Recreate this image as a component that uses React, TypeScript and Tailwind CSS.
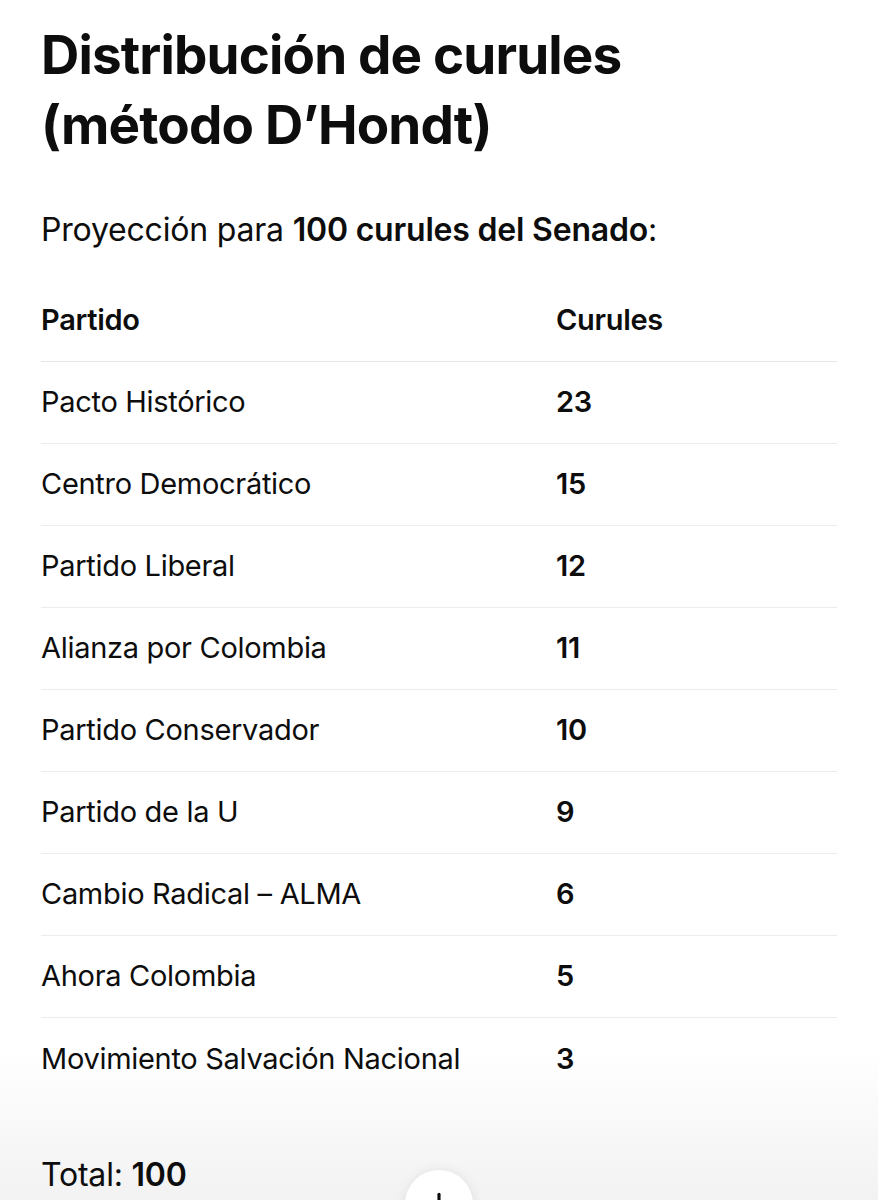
import { ArrowDown } from 'lucide-react';

const rows: [string, number][] = [
  ['Pacto Histórico', 23],
  ['Centro Democrático', 15],
  ['Partido Liberal', 12],
  ['Alianza por Colombia', 11],
  ['Partido Conservador', 10],
  ['Partido de la U', 9],
  ['Cambio Radical – ALMA', 6],
  ['Ahora Colombia', 5],
  ['Movimiento Salvación Nacional', 3],
];

export default function App() {
  return (
    <div className="relative h-[1200px] overflow-hidden bg-white text-[#0d0d0d] font-['Inter',sans-serif]">
      {/* bottom fade behind the composer */}
      <div className="absolute inset-x-0 bottom-0 h-[150px] bg-gradient-to-b from-white to-[#f2f2f2]" />

      <div className="relative px-[41px] pt-[20px]">
        <h2 className="text-[53px] font-bold leading-[70px] tracking-[-0.85px]">
          Distribución de curules
          <br />
          (método D’Hondt)
        </h2>

        <p className="mt-[50px] text-[32px] leading-[40px] tracking-[-0.2px]">
          Proyección para <span className="font-semibold">100 curules del Senado</span>:
        </p>

        <table className="mt-[29px] w-full border-collapse text-[29px] tracking-[-0.3px]">
          <thead>
            <tr className="h-[82px] border-b border-[#e5e5e5]">
              <th className="w-[515px] text-left font-semibold">Partido</th>
              <th className="text-left font-semibold">Curules</th>
            </tr>
          </thead>
          <tbody>
            {rows.map(([name, n], i) => (
              <tr key={name} className={`h-[82px] ${i < rows.length - 1 ? 'border-b border-[#ececec]' : ''}`}>
                <td>{name}</td>
                <td className="font-semibold">{n}</td>
              </tr>
            ))}
          </tbody>
        </table>

        <p className="mt-[56px] text-[32px] leading-[40px] tracking-[-0.2px]">
          Total: <span className="font-semibold">100</span>
        </p>
      </div>

      <button className="absolute left-[405px] top-[1170px] flex h-[68px] w-[68px] items-start justify-center rounded-full bg-white pt-[18px] shadow-[0_0_12px_rgba(0,0,0,0.08)]">
        <ArrowDown size={30} strokeWidth={2.5} className="text-[#0d0d0d]" />
      </button>
    </div>
  );
}
